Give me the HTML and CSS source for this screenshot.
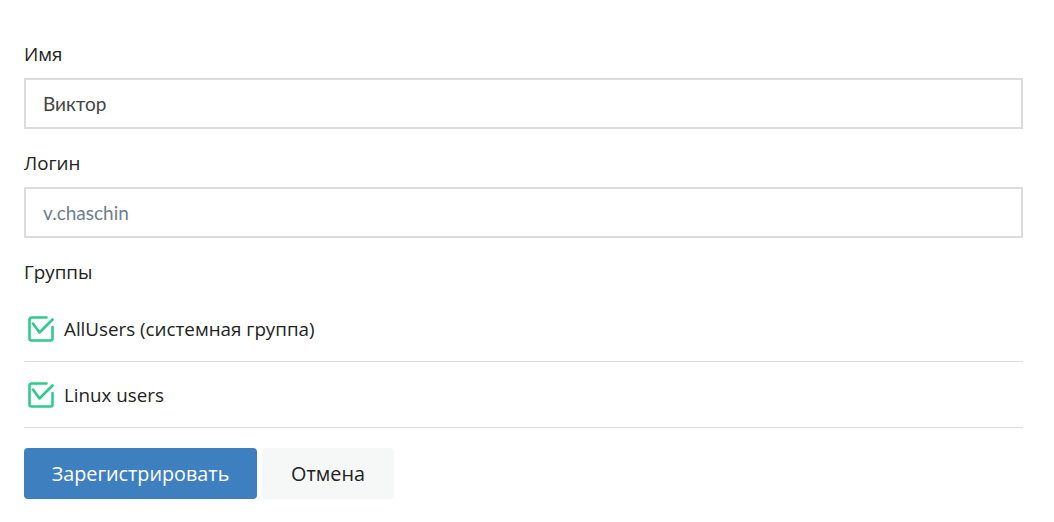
FILE: index.html
```html
<!DOCTYPE html>
<html lang="ru">
<head>
<meta charset="utf-8">
<link rel="stylesheet" href="styles.css">
</head>
<body>
<form class="form">
  <div class="field">
    <label class="label">Имя</label>
    <input class="input" type="text" value="Виктор">
  </div>
  <div class="field">
    <label class="label">Логин</label>
    <input class="input" type="text" placeholder="v.chaschin">
  </div>
  <div class="field groups">
    <label class="label">Группы</label>
    <div class="group-row">
      <svg class="check" viewBox="0 0 26 26" width="26" height="26"><path d="M18.5 1.5H3.5a2 2 0 0 0-2 2v19a2 2 0 0 0 2 2h19a2 2 0 0 0 2-2V11" fill="none" stroke="#2ecb8c" stroke-width="2.6" stroke-linecap="round" stroke-linejoin="round"/><path d="M5 7.5l6.5 9L24.5 3.5" fill="none" stroke="#2ecb8c" stroke-width="2.6" stroke-linecap="round" stroke-linejoin="round"/></svg>
      <span class="group-name">AllUsers (системная группа)</span>
    </div>
    <div class="group-row">
      <svg class="check" viewBox="0 0 26 26" width="26" height="26"><path d="M18.5 1.5H3.5a2 2 0 0 0-2 2v19a2 2 0 0 0 2 2h19a2 2 0 0 0 2-2V11" fill="none" stroke="#2ecb8c" stroke-width="2.6" stroke-linecap="round" stroke-linejoin="round"/><path d="M5 7.5l6.5 9L24.5 3.5" fill="none" stroke="#2ecb8c" stroke-width="2.6" stroke-linecap="round" stroke-linejoin="round"/></svg>
      <span class="group-name">Linux users</span>
    </div>
  </div>
  <div class="actions">
    <button type="button" class="btn btn-primary">Зарегистрировать</button>
    <button type="button" class="btn btn-light">Отмена</button>
  </div>
</form>
</body>
</html>
```
FILE: styles.css
```css
* { box-sizing: border-box; }
html, body { margin: 0; padding: 0; background: #fff; }
body {
  font-family: "Open Sans", "Liberation Sans", Arial, sans-serif;
  color: #222;
}
.form {
  padding: 42px 31px 0 24px;
  display: flex;
  flex-direction: column;
}
.field {
  display: flex;
  flex-direction: column;
  margin-bottom: 22px;
}
.label {
  font-size: 18.8px;
  line-height: 24px;
  height: 24px;
  margin-bottom: 12px;
  color: #222;
}
.input {
  height: 51px;
  width: 100%;
  border: 2px solid #dcdcdc;
  border-radius: 0;
  padding: 0 17px;
  font-family: "Lato", "Liberation Sans", sans-serif;
  font-size: 19px;
  color: #444;
  outline: none;
  background: #fff;
}
.input::placeholder { color: #6f7d8c; opacity: 1; }
.groups { margin-bottom: 0; }
.groups .label { margin-bottom: 12px; }
.group-row {
  display: flex;
  align-items: center;
  height: 66px;
  border-bottom: 1px solid #dedede;
  padding-left: 4px;
}
.check { flex: none; display: block; }
.group-name {
  margin-left: 10px;
  font-size: 18.8px;
  color: #222;
}
.actions {
  display: flex;
  gap: 5px;
  margin-top: 20px;
}
.btn {
  height: 51px;
  border: none;
  border-radius: 4px;
  font-family: "Open Sans", "Liberation Sans", Arial, sans-serif;
  font-size: 19.8px;
  padding: 0;
  cursor: pointer;
}
.btn-primary {
  background: #3e80bf;
  color: #fff;
  width: 233px;
}
.btn-light {
  background: #f6f8f8;
  color: #222;
  width: 132px;
}
```
